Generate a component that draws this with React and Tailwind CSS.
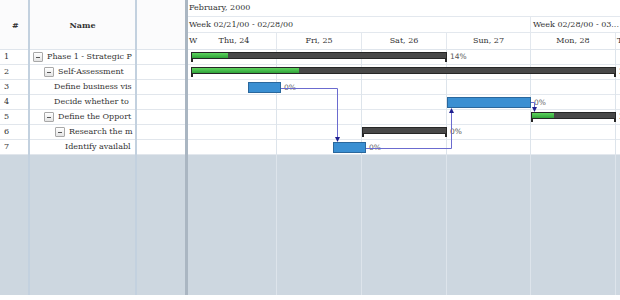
import React from 'react';

const SERIF = "font-['DejaVu_Serif',serif]";

const ROWS = [
  { id: 1, name: 'Phase 1 - Strategic P', indent: 3, box: true },
  { id: 2, name: 'Self-Assessment', indent: 14, box: true },
  { id: 3, name: 'Define business vis', indent: 24 },
  { id: 4, name: 'Decide whether to', indent: 24 },
  { id: 5, name: 'Define the Opport', indent: 14, box: true },
  { id: 6, name: 'Research the m', indent: 25, box: true },
  { id: 7, name: 'Identify availabl', indent: 35 },
];

// bars: x positions inside the gantt body (timeline starts at page x 188)
const BARS = [
  { kind: 'summary', left: 3, width: 256, done: 36, label: '14%' },
  { kind: 'summary', left: 3, width: 425, done: 107, label: '25%' },
  { kind: 'task', left: 60, width: 33, label: '0%' },
  { kind: 'task', left: 259, width: 84, label: '0%' },
  { kind: 'summary', left: 343, width: 85, done: 22, label: '25%' },
  { kind: 'summary', left: 174, width: 85, done: 0, label: '0%' },
  { kind: 'task', left: 145, width: 33, label: '0%' },
];

const DAYS = [
  { label: 'W', w: 'w-[4px]', left: true },
  { label: 'Thu, 24', w: 'w-[85px]' },
  { label: 'Fri, 25', w: 'w-[85px]' },
  { label: 'Sat, 26', w: 'w-[85px]' },
  { label: 'Sun, 27', w: 'w-[84px]' },
  { label: 'Mon, 28', w: 'w-[85px]' },
  { label: 'T', w: 'flex-1', left: true },
];

const LINES = [89, 174, 259, 343, 428];

const CollapseBox = () => (
  <span className="inline-flex w-[10px] h-[10px] shrink-0 items-center justify-center border border-[#a8a8a8] rounded-[1px] bg-gradient-to-b from-white to-[#e4e4e4]">
    <span className="block w-[4px] h-px bg-[#555]" />
  </span>
);

const Bar = ({ bar }) => {
  if (bar.kind === 'task') {
    return (
      <>
        <div
          className="absolute top-[2px] h-[11px] z-10 bg-[#3a8fd2] border border-[#2a679c]"
          style={{ left: bar.left, width: bar.width }}
        />
        <span
          className="absolute top-[1px] z-10 text-[7.5px] leading-[13px] text-[#666] font-['DejaVu_Sans',sans-serif]"
          style={{ left: bar.left + bar.width + 3 }}
        >
          {bar.label}
        </span>
      </>
    );
  }
  return (
    <>
      <div
        className="absolute top-[2px] h-[7px] z-10 bg-[#484848] border border-[#262626] overflow-hidden"
        style={{ left: bar.left, width: bar.width }}
      >
        {bar.done > 0 && (
          <div className="h-full bg-gradient-to-b from-[#5ed45e] to-[#2fa33a]" style={{ width: bar.done }} />
        )}
      </div>
      <div className="absolute top-[8px] w-[2px] h-[4px] z-10 bg-[#262626]" style={{ left: bar.left }} />
      <div className="absolute top-[8px] w-[2px] h-[4px] z-10 bg-[#262626]" style={{ left: bar.left + bar.width - 2 }} />
      <span
        className="absolute top-[2px] z-10 text-[7.5px] leading-[9px] text-[#555] font-['DejaVu_Sans',sans-serif]"
        style={{ left: bar.left + bar.width + 3 }}
      >
        {bar.label}
      </span>
    </>
  );
};

const Arrow = ({ x, y, dir }) => {
  const pts = dir === 'down'
    ? `${x - 2.5},${y - 5} ${x + 2.5},${y - 5} ${x},${y}`
    : `${x - 2.5},${y + 5} ${x + 2.5},${y + 5} ${x},${y}`;
  return <polygon points={pts} fill="#1f1f8f" />;
};

const Connectors = () => (
  <svg className="absolute left-0 top-0 z-20 pointer-events-none" width="432" height="245">
    <g stroke="#6b6bcf" strokeWidth="1" fill="none">
      <polyline points="93,38.5 149.5,38.5 149.5,88" />
      <polyline points="178,98.5 263.5,98.5 263.5,62" />
      <polyline points="343,52.5 346.5,52.5 346.5,58" />
    </g>
    <Arrow x={149.5} y={92} dir="down" />
    <Arrow x={263.5} y={58} dir="up" />
    <Arrow x={346.5} y={62} dir="down" />
  </svg>
);

const App = () => {
  return (
    <div className={`w-[620px] h-[300px] bg-white overflow-hidden text-[#333] ${SERIF}`}>
      <div className="h-[295px] flex">

        {/* LEFT GRID */}
        <div className="w-[185px] flex">
          {/* # column */}
          <div className="w-[30px] flex flex-col border-r-2 border-[#c3d1df]">
            <div className="h-[50px] flex items-center pl-[12px] font-bold text-[8px] bg-[#fbfbfc] border-b border-[#dfe5ec]">#</div>
            {ROWS.map(r => (
              <div key={r.id} className="h-[15px] flex items-center pl-[4px] text-[8px] bg-white border-b border-[#e1e6ec]">
                {r.id}
              </div>
            ))}
            <div className="flex-1 bg-[#cdd7e0]" />
          </div>

          {/* Name column */}
          <div className="w-[107px] flex flex-col border-r-2 border-[#c3d1df]">
            <div className="h-[50px] flex items-center justify-center font-bold text-[8px] bg-[#fbfbfc] border-b border-[#dfe5ec]">Name</div>
            {ROWS.map(r => (
              <div
                key={r.id}
                className="h-[15px] flex items-center gap-[4px] text-[8px] bg-white border-b border-[#e1e6ec] overflow-hidden whitespace-nowrap"
                style={{ paddingLeft: r.indent }}
              >
                {r.box && <CollapseBox />}
                <span>{r.name}</span>
              </div>
            ))}
            <div className="flex-1 bg-[#cdd7e0]" />
          </div>

          {/* empty column */}
          <div className="flex-1 flex flex-col">
            <div className="h-[50px] bg-[#fbfbfc] border-b border-[#dfe5ec]" />
            {ROWS.map(r => (
              <div key={r.id} className="h-[15px] bg-white border-b border-[#e1e6ec]" />
            ))}
            <div className="flex-1 bg-[#cdd7e0]" />
          </div>
        </div>

        {/* SPLITTER */}
        <div className="w-[3px] bg-[#aab6c2]" />

        {/* GANTT */}
        <div className="flex-1 flex flex-col overflow-hidden">
          {/* header */}
          <div className="h-[50px] flex flex-col text-[8px] bg-white">
            <div className="h-[17px] flex items-center pl-[1px] border-b border-[#e3e8ee]">February, 2000</div>
            <div className="h-[16px] flex border-b border-[#e3e8ee] whitespace-nowrap">
              <div className="w-[343px] flex items-center pl-[1px] border-r border-[#e3e8ee]">Week 02/21/00 - 02/28/00</div>
              <div className="flex-1 flex items-center pl-[2px] overflow-hidden">Week 02/28/00 - 03...</div>
            </div>
            <div className="h-[17px] flex border-b border-[#dfe5ec] whitespace-nowrap">
              {DAYS.map((d, i) => (
                <div
                  key={i}
                  className={`${d.w} shrink-0 flex items-center ${d.left ? 'pl-[1px]' : 'justify-center border-r border-[#e3e8ee]'}`}
                >
                  {d.label}
                </div>
              ))}
            </div>
          </div>

          {/* body */}
          <div className="relative flex-1 bg-[#cdd7e0]">
            {ROWS.map((r, i) => (
              <div key={r.id} className="relative h-[15px] bg-white border-b border-[#e3e8ee]">
                <Bar bar={BARS[i]} />
              </div>
            ))}
            {LINES.map(x => (
              <div key={x} className="absolute top-0 bottom-0 w-px bg-[#dde4eb]" style={{ left: x - 1 }} />
            ))}
            <Connectors />
          </div>
        </div>
      </div>
    </div>
  );
};

export default App;
